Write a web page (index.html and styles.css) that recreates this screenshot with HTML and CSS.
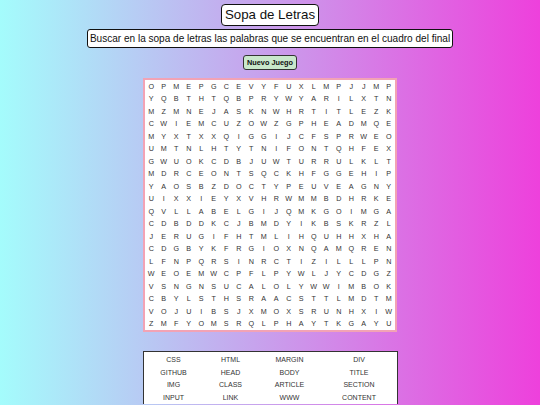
FILE: index.html
```html
<!DOCTYPE html>
<html lang="es">
<head>
<meta charset="utf-8">
<title>Sopa de Letras</title>
<link rel="stylesheet" href="styles.css">
</head>
<body>
<main class="page">
  <h1 class="title">Sopa de Letras</h1>
  <p class="subtitle">Buscar en la sopa de letras las palabras que se encuentran en el cuadro del final</p>
  <button class="new-game" type="button">Nuevo Juego</button>
  <div class="board" id="board"></div>
  <div class="words">
    <span>CSS</span><span>HTML</span><span>MARGIN</span><span>DIV</span>
    <span>GITHUB</span><span>HEAD</span><span>BODY</span><span>TITLE</span>
    <span>IMG</span><span>CLASS</span><span>ARTICLE</span><span>SECTION</span>
    <span>INPUT</span><span>LINK</span><span>WWW</span><span>CONTENT</span>
  </div>
</main>
<script src="script.js"></script>
</body>
</html>
```

FILE: script.js
```js
var rows = [
  "OPMEPGCEVYFUXLMPJJMP",
  "YQBTHTQBPRYWYARILXTN",
  "MZMNEJASKNWHRTITLEZK",
  "CWIEMCUZOWZGPHEADMQE",
  "MYXTXXQIGGIJCFSPRWEO",
  "UMTNLHTYTNIFONTQHFEX",
  "GWUOKCDBJUWTURRULKLT",
  "MDRCEONTSQCKHFGGEHIP",
  "YAOSBZDOCTYPEUVEAGNY",
  "UIXXIEYXVHRWMMBDHRKE",
  "QVLLABELGIJQMKGOIMGA",
  "CDBDDKCJBMDYIKBSKRZL",
  "JERUGIFHTMLIHQUHHXHA",
  "CDGBYKFRGIOXNQAMQREN",
  "LFNPQRSINRCTIZILLLPN",
  "WEOEMWCPFLPYWLJYCDGZ",
  "VSNGNSUCALOLYWWIMBOK",
  "CBYLSTHSRAACSTTLMDTM",
  "VOJUIBSJXMOXSRUNHXIW",
  "ZMFYOMSRQLPHAYTKGAYU"
];
var board = document.getElementById("board");
rows.forEach(function (r) {
  for (var i = 0; i < r.length; i++) {
    var c = document.createElement("span");
    c.className = "cell";
    c.textContent = r[i];
    board.appendChild(c);
  }
});
```

FILE: styles.css
```css
html, body {
  margin: 0;
  padding: 0;
}
body {
  width: 540px;
  height: 405px;
  overflow: hidden;
  background: linear-gradient(to right, #a4fcfc, #ee40dc);
  font-family: "Liberation Sans", Arial, sans-serif;
  color: #222;
}
.page {
  display: flex;
  flex-direction: column;
  align-items: center;
  padding-top: 4px;
}
.title {
  margin: 0;
  font-size: 13.3px;
  font-weight: normal;
  line-height: 20px;
  padding: 0 3px;
  background: #fff;
  border: 1px solid #111;
  border-radius: 4px;
  color: #111;
}
.subtitle {
  margin: 3px 0 0;
  font-size: 10.05px;
  line-height: 17px;
  padding: 0 2px;
  background: #fff;
  border: 1px solid #111;
  border-radius: 3px;
  color: #111;
}
.new-game {
  margin-top: 7px;
  font-family: "Liberation Sans", Arial, sans-serif;
  font-weight: bold;
  font-size: 7.3px;
  line-height: 13px;
  padding: 0 3px;
  background: #c9e8cb;
  border: 1px solid #333;
  border-radius: 3px;
  color: #111;
}
.board {
  margin-top: 8px;
  display: grid;
  grid-template-columns: repeat(20, 12.5px);
  grid-auto-rows: 12.5px;
  background: #fff;
  border: 2px solid #f2a3b5;
}
.cell {
  display: flex;
  align-items: center;
  justify-content: center;
  font-size: 7.2px;
  color: #333;
}
.words {
  margin-top: 19px;
  width: 253px;
  display: grid;
  grid-template-columns: 60px 54px 64px 75px;
  grid-auto-rows: 12.7px;
  padding-top: 1px;
  background: #fff;
  border: 1px solid #333;
  border-bottom: none;
}
.words span {
  display: flex;
  align-items: center;
  justify-content: center;
  font-size: 7px;
  color: #333;
}
```
